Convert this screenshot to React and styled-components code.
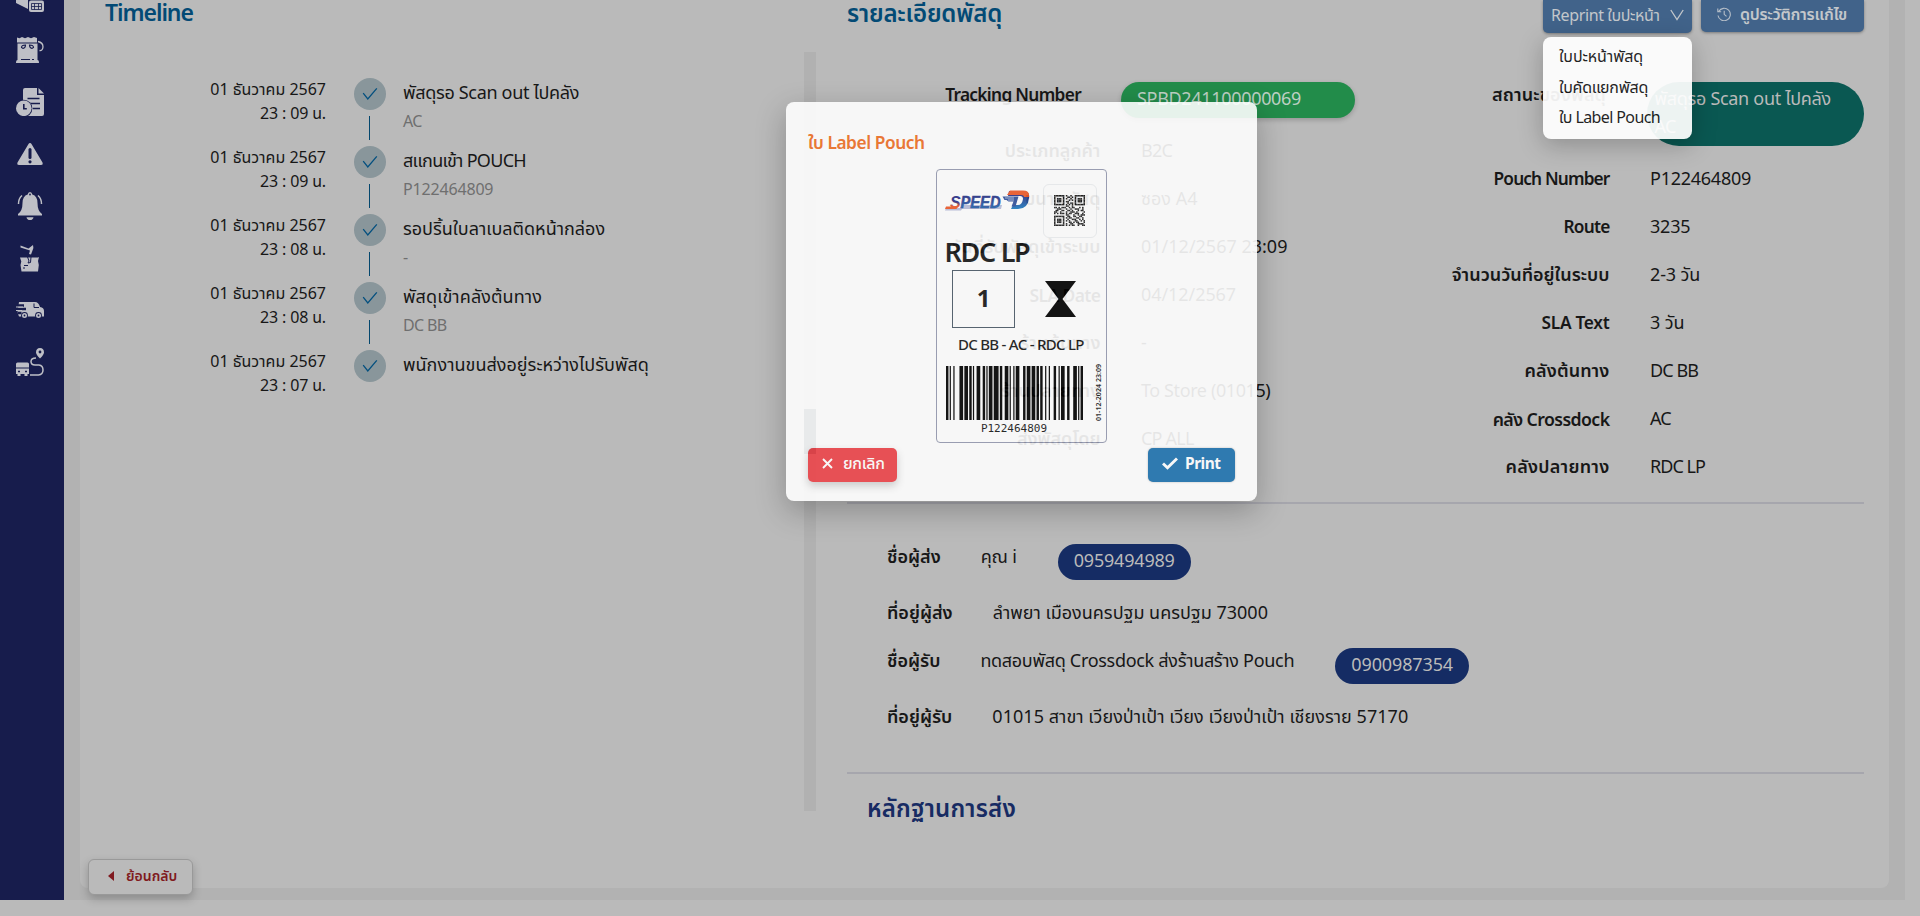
import React from "react";
import styled, { createGlobalStyle } from "styled-components";

const GlobalStyle = createGlobalStyle`
  *, *::before, *::after { box-sizing: border-box; }
  body {
    margin: 0;
    height: 916px;
    overflow: hidden;
    background: #bababa;
    color: #171717;
    font-family: "Noto Sans", "Noto Sans Thai", sans-serif;
    font-size: 18px;
    line-height: 24px;
  }
`;

const Text = styled.span`
  white-space: nowrap;
  font-size: ${(p) => p.$size || 18}px;
  font-weight: ${(p) => p.$weight || 400};
  letter-spacing: ${(p) => p.$ls || 0}px;
`;

const Page = styled.div`
  position: relative;
  width: 1920px;
  height: 916px;
  overflow: hidden;
`;
const Shell = styled.div`
  display: flex;
  width: 1905px;
  height: 900px;
  background: #b2b2b2;
`;
const Sidebar = styled.nav`
  display: flex;
  flex-direction: column;
  align-items: center;
  gap: 24px;
  width: 64px;
  padding-right: 4px;
  background: #171c4c;
  flex: none;
  overflow: hidden;
  svg { display: block; flex: none; }
  svg:first-child { margin-top: -16px; }
`;
const Card = styled.main`
  display: flex;
  width: 1809px;
  height: 888px;
  margin-left: 16px;
  border-radius: 0 0 8px 8px;
  background: #bababa;
`;

const TimelineColumn = styled.section`
  width: 724px;
  flex: none;
`;
const TimelineHeader = styled.header`
  display: flow-root;
  height: 77px;
  padding-left: 25px;
`;
const Heading = styled.h2`
  margin: 0;
  padding-top: ${(p) => p.$top || 0}px;
  margin-top: ${(p) => p.$pull || 0}px;
  color: ${(p) => p.$color || "#034a75"};
  font-size: ${(p) => p.$size || 24}px;
  font-weight: 600;
  line-height: 32px;
  white-space: nowrap;
  letter-spacing: ${(p) => p.$ls || 0}px;
`;
const Step = styled.div`
  display: flex;
  height: 68px;
`;
const StepDate = styled.div`
  display: flex;
  flex-direction: column;
  align-items: flex-end;
  width: 246px;
`;
const StepMark = styled.div`
  display: flex;
  flex-direction: column;
  align-items: center;
  width: 32px;
  margin: 1px 17px 0 28px;
`;
const Dot = styled.div`
  display: grid;
  place-items: center;
  width: 32px;
  height: 32px;
  border-radius: 50%;
  background: #89969b;
`;
const Line = styled.div`
  width: 1px;
  height: 24px;
  margin: 6px 1px 0 0;
  background: #04476e;
`;
const StepBody = styled.div`
  display: flex;
  flex-direction: column;
  gap: 5px;
  padding-top: 3px;
`;
const Muted = styled(Text)`
  color: #6f6f6f;
`;

const ScrollTrack = styled.div`
  width: 12px;
  height: 759px;
  margin-top: 52px;
  padding-top: 357px;
  background: #b1b1b1;
  flex: none;
`;
const ScrollThumb = styled.div`
  height: 45px;
  background: #2d3f4e;
`;

const DetailColumn = styled.section`
  width: 1017px;
  margin-left: 31px;
  flex: none;
`;
const DetailHeader = styled.header`
  display: flex;
  justify-content: space-between;
  height: 82px;
`;
const Actions = styled.div`
  display: flex;
  align-items: flex-start;
  gap: 9px;
`;
const Anchor = styled.div`
  position: relative;
`;
const ActionButton = styled.button`
  display: flex;
  align-items: center;
  gap: ${(p) => p.$gap}px;
  width: ${(p) => p.$width}px;
  height: ${(p) => p.$height}px;
  padding: 0 0 4px ${(p) => p.$left}px;
  border: 0;
  border-radius: 0 0 5px 5px;
  background: #41638a;
  box-shadow: 0 1px 3px rgba(0, 0, 0, 0.35);
  color: #c3c7cb;
  font: inherit;
  line-height: 24px;
`;
const Menu = styled.div`
  position: absolute;
  z-index: 2;
  top: 37px;
  left: 0;
  display: flex;
  flex-direction: column;
  width: 149px;
  height: 102px;
  padding: 4px 0 0 16px;
  border-radius: 8px;
  background: #fff;
  box-shadow: 0 6px 24px rgba(0, 0, 0, 0.25);
  opacity: 0.93;
  line-height: 30.7px;
`;

const DetailGrid = styled.div`
  display: flex;
  height: 420px;
`;
const DetailList = styled.div`
  width: ${(p) => p.$width}px;
`;
const DetailRow = styled.div`
  display: flex;
  gap: 40.5px;
  height: ${(p) => p.$height || 48}px;
`;
const Label = styled(Text)`
  width: ${(p) => p.$width}px;
  padding-top: ${(p) => (p.$size < 18 ? 0.8 : 0)}px;
  text-align: right;
`;
const TrackingPill = styled.div`
  width: 234px;
  height: 36px;
  margin-left: -0.5px;
  padding: 4px 16px;
  border-radius: 18px;
  background: #228c4a;
  box-shadow: 0 2px 5px rgba(0, 0, 0, 0.2);
  color: #bdd0c3;
`;
const StatusPill = styled.div`
  display: flex;
  flex-direction: column;
  width: 217.5px;
  height: 64px;
  padding: 2px 8px;
  border-radius: 32px;
  background: #0a5852;
  color: #bababa;
  line-height: 28px;
`;
const Divider = styled.div`
  height: 2px;
  background: #a6a6ad;
`;
const Contacts = styled.div`
  height: 268px;
  padding: 40px 0 0 40px;
`;
const ContactRow = styled.div`
  display: flex;
  gap: 40px;
  height: ${(p) => p.$height}px;
`;
const PhonePill = styled.div`
  height: 36px;
  margin-left: 1px;
  padding: 4px 16px;
  border-radius: 18px;
  background: #152c64;
  color: #bababa;
`;
const Evidence = styled.div`
  padding-left: 20px;
`;

const BackButton = styled.button`
  position: absolute;
  left: 88px;
  top: 859px;
  display: flex;
  align-items: center;
  gap: 12px;
  width: 105px;
  height: 36px;
  padding: 0 0 2px 19px;
  border: 1px solid #999;
  border-radius: 6px;
  background: #bababa;
  box-shadow: 0 4px 10px rgba(0, 0, 0, 0.22);
  color: #801a20;
  font: inherit;
`;

const Modal = styled.div`
  position: absolute;
  z-index: 3;
  left: 785.5px;
  top: 102px;
  display: flex;
  flex-direction: column;
  align-items: center;
  width: 471.5px;
  height: 399px;
  padding: 29px 22.5px 0;
  border-radius: 8px;
  background: #fff;
  box-shadow: 0 10px 30px rgba(0, 0, 0, 0.28);
  opacity: 0.89;
`;
const ModalTitle = styled(Text)`
  align-self: flex-start;
  color: #ef7026;
`;
const ModalFooter = styled.div`
  display: flex;
  justify-content: space-between;
  align-self: stretch;
  margin-top: 5px;
`;
const ModalButton = styled.button`
  display: flex;
  align-items: center;
  gap: ${(p) => p.$gap}px;
  width: ${(p) => p.$width}px;
  height: 34.5px;
  padding: 0 0 3px ${(p) => p.$left}px;
  border: 0;
  border-radius: 5px;
  background: ${(p) => p.$color};
  box-shadow: ${(p) => p.$shadow};
  color: #fff;
  font: inherit;
`;

const Slip = styled.div`
  width: 170.5px;
  height: 273.5px;
  margin-top: 14px;
  padding: 13.5px 0 0 7.5px;
  border: 1px solid #959ab0;
  border-radius: 4px;
  flex: none;
`;
const SlipTop = styled.div`
  display: flex;
  height: 52px;
  svg.logo { margin-top: 5px; flex: none; }
`;
const QrBox = styled.div`
  display: grid;
  place-items: center;
  width: 54px;
  height: 54px;
  margin-left: 12px;
  border: 1px solid #eceef0;
  border-radius: 6px;
`;
const Destination = styled.div`
  font-size: 27px;
  font-weight: 600;
  line-height: 32px;
  letter-spacing: -1.3px;
`;
const Sorting = styled.div`
  display: flex;
  align-items: center;
  gap: 30px;
  margin: 2px 0 6px 7.5px;
`;
const Slot = styled.div`
  width: 63px;
  height: 58px;
  border: 1.5px solid #4b5a68;
  font-size: 24px;
  font-weight: 700;
  line-height: 54px;
  text-align: center;
`;
const RouteText = styled.div`
  padding-left: 13.5px;
  font-size: 15px;
  font-weight: 500;
  line-height: 21px;
  letter-spacing: -0.72px;
  white-space: nowrap;
`;
const CodeRow = styled.div`
  display: flex;
  margin-top: 11px;
  padding-left: 1px;
`;
const Code = styled.div`
  display: flex;
  flex-direction: column;
  align-items: center;
  width: 137px;
  font-family: "DejaVu Sans Mono", monospace;
  font-size: 11px;
  line-height: 18px;
`;
const Stamp = styled.div`
  writing-mode: vertical-rl;
  transform: rotate(180deg);
  height: 60px;
  margin: -5px 0 0 11px;
  font-size: 7px;
  font-weight: 600;
  line-height: 9px;
  letter-spacing: 0.05px;
  white-space: nowrap;
`;

const steps = [
  ["23 : 09 น.", "พัสดุรอ Scan out ไปคลัง", "AC", -0.32, -0.7],
  ["23 : 09 น.", "สแกนเข้า POUCH", "P122464809", -0.7, -0.17],
  ["23 : 08 น.", "รอปริ้นใบลาเบลติดหน้ากล่อง", "-", 0, 0],
  ["23 : 08 น.", "พัสดุเข้าคลังต้นทาง", "DC BB", 0.1, -0.65],
  ["23 : 07 น.", "พนักงานขนส่งอยู่ระหว่างไปรับพัสดุ", "", 0.03, 0],
];

// label, value, label size, label spacing, value spacing
const leftDetails = [
  ["ประเภทลูกค้า", "B2C", 18, 0, -0.8],
  ["ขนาดพัสดุ", "ซอง A4", 18, 0, 0],
  ["วันที่รับพัสดุเข้าระบบ", "01/12/2567 23:09", 18, 0, 0],
  ["SLA Date", "04/12/2567", 17.5, -0.6, -0.07],
  ["ร้านต้นทาง", "-", 18, 0, 0],
  ["ร้านปลายทาง", "To Store (01015)", 18, 0.15, -0.4],
  ["ส่งพัสดุโดย", "CP ALL", 18, 0, -0.8],
];
const rightDetails = [
  ["Pouch Number", "P122464809", 17.3, -0.86, -0.25],
  ["Route", "3235", 17.3, -0.78, -0.21],
  ["จำนวนวันที่อยู่ในระบบ", "2-3 วัน", 18, 0, -0.13],
  ["SLA Text", "3 วัน", 17.3, -0.27, -0.13],
  ["คลังต้นทาง", "DC BB", 18, 0.1, -0.9],
  ["คลัง Crossdock", "AC", 17.7, -0.58, -0.8],
  ["คลังปลายทาง", "RDC LP", 18, 0.25, -0.95],
];

// Code 128 symbols of the pouch number, as bar and gap widths
const barcode =
  "211214" + "313121" + "123221" + "113141" + "223112" + "113321" + "313121" + "221213" + "221132" + "2331112";

const qr = [
  "111111101001001111111",
  "100000100110101000001",
  "101110101001001011101",
  "101110100010101011101",
  "101110101100001011101",
  "100000100101101000001",
  "111111101010101111111",
  "000000001100100000000",
  "110101110010110001010",
  "001110001001001110010",
  "011001100110100010110",
  "110010001001110100001",
  "101011101011001110010",
  "000000001100010010111",
  "111111100110011001100",
  "100000101011000110010",
  "101110100100111001010",
  "101110101010001100101",
  "101110100011010110001",
  "100000101001100011110",
  "111111101010110010011",
];

function Barcode() {
  let x = 0;
  const bars = [];
  [...barcode].forEach((c, i) => {
    const w = Number(c);
    if (i % 2 === 0) bars.push(<rect key={i} x={x} width={w} height="54" />);
    x += w;
  });
  return (
    <svg width="137" height="54" viewBox={`0 0 ${x} 54`} preserveAspectRatio="none" fill="#000">
      {bars}
    </svg>
  );
}

function QrCode() {
  return (
    <svg width="31" height="31" viewBox="0 0 21 21" fill="#1c1c1c">
      {qr.flatMap((row, y) =>
        [...row].map((c, x) => (c === "1" ? <rect key={`${x}-${y}`} x={x} y={y} width="1.03" height="1.03" /> : null))
      )}
    </svg>
  );
}

function Logo() {
  return (
    <svg className="logo" width="86" height="26" viewBox="0 0 86 26">
      <defs>
        <linearGradient id="word" x1="0" y1="0" x2="0" y2="1">
          <stop offset="0.2" stopColor="#2b2f86" />
          <stop offset="1" stopColor="#1f7fc4" />
        </linearGradient>
        <linearGradient id="first" x1="0" y1="0" x2="0" y2="1">
          <stop offset="0.5" stopColor="#2b2f86" />
          <stop offset="0.75" stopColor="#ee5a2a" />
        </linearGradient>
      </defs>
      <path d="M1 19h14l2-3h40l-1 4H17l-1 1.500H0z" fill="#b9bfdc" />
      <path d="M1 17.500h12l-1.500 2.500H0z" fill="#ee5a2a" />
      <g fontFamily="Liberation Sans" fontWeight="700" fontStyle="italic" fontSize="16" strokeWidth="0.500">
        <text x="5" y="18.500" fill="url(#first)">S</text>
        <text x="15.500" y="18.500" fill="url(#word)" stroke="#26408f" textLength="40" lengthAdjust="spacingAndGlyphs">PEED</text>
      </g>
      <path d="M64 2h14q7 0 6 7q-1 11-11 11H66l2-4h5q4 0 5-6q0-3-3-3H63z" fill="url(#word)" />
      <path d="M65 1.500h13q7 0 6 6.500h-5q0-2-3-2H62z" fill="#ee5a2a" />
      <path d="M57.500 7.500h16l-3 10h-4l2-5h-5l-2-1.500h-2z" fill="#31519c" />
      <path d="M60 9h9M63 11h6" stroke="#cfd8ee" strokeWidth="0.800" />
    </svg>
  );
}

const Check = () => (
  <svg width="16" height="14" viewBox="0 0 16 14" fill="none" stroke="#04507f" strokeWidth="1.300">
    <path d="M1.200 6.200L5.800 12L14.800 1.300" />
  </svg>
);

const ink = "#bebfc6";
const navy = "#171c4c";

function SidebarIcons() {
  const box = { width: 28, height: 28, viewBox: "0 0 28 28", fill: ink };
  return (
    <Sidebar>
      <svg {...box}>
        <path d="M0 12h12v13L0 19z" />
        <rect x="13" y="16.500" width="15" height="11.500" rx="2" />
        <path d="M15.500 19.500h10v6h-10zM15.500 22.500h10M18.500 19.500v6M22.500 19.500v6" fill="none" stroke={navy} strokeWidth=".8" />
      </svg>
      <svg {...box}>
        <path d="M1 1.500l2.500.800L6 1l3 1.300L12 1l3 1.300L18 1l3 1v4.500H1z" />
        <path d="M1.500 7.500h20V24q1.500 0 1.500 3H0q0-3 1.500-3z" />
        <path d="M22 5.500q5 1 5 5.500q-.5 4-3.500 3.500" fill="none" stroke={ink} strokeWidth="1.300" />
        <path d="M5.500 11.500q0-2.500 4-2.500q0 3-2.500 3.500zM17.500 11.500q0-2.500-4-2.500q0 3 2.500 3.500z" fill="none" stroke={navy} strokeWidth="1.100" />
        <path d="M5 23.500h9M16 23.500h2" stroke={navy} />
      </svg>
      <svg {...box}>
        <path d="M9 0h12v7h7v19q0 2-2 2H7V2q0-2 2-2z" />
        <path d="M22.500 0L28 5.500h-5.500z" />
        <path d="M11.500 10.500h12M15 15.500h9M17 20.500h7" stroke={navy} strokeWidth="1.400" />
        <circle cx="7.800" cy="20.300" r="8.600" fill={navy} />
        <circle cx="7.800" cy="20.300" r="7.800" />
        <path d="M7.800 16v4.800h3" fill="none" stroke={navy} strokeWidth="1.600" />
      </svg>
      <svg {...box}>
        <path d="M14 3q1 0 1.500 1L26.500 22.500q.8 2.500-1.500 2.500H3q-2.300 0-1.500-2.500L12.500 4Q13 3 14 3z" />
        <path d="M14 9.500v8" stroke={navy} strokeWidth="3" strokeLinecap="round" />
        <circle cx="14" cy="21.800" r="1.600" fill={navy} />
      </svg>
      <svg {...box}>
        <path d="M14 0q2 0 2.300 2.500Q21.500 4 21.500 11q0 8 4.500 11v1.500H2V22q4.500-3 4.500-11q0-7 5.200-8.500Q12 0 14 0z" />
        <path d="M10.500 25.200h7q-.5 2.800-3.500 2.800t-3.500-2.800z" />
        <path d="M6 3.500Q2.500 6.500 2.500 12M22 3.500q3.500 3 3.500 8.500" fill="none" stroke={ink} strokeWidth="1.500" />
        <circle cx="14" cy="2.500" r=".9" fill={navy} />
      </svg>
      <svg {...box}>
        <path d="M4.500 1.500l8 3L17 1q1 3-.5 5.500l-1.500 4l-2-.500l1-3.500l-9.500-3z" />
        <path d="M5 13.500h17l1-.500-1 4 .8 4-.8 6.500H5.500L4.500 21l.8-3.500-1.300-4z" />
        <path d="M11.500 13l1.500 4-1 2 2.500-.500L15 13M8 21.500h4M7 24h2" fill="none" stroke={navy} />
      </svg>
      <svg {...box}>
        <path d="M3 6h16q3.500 0 5 5q4 .5 4 4v5.500H3l-1.500-4z" />
        <path d="M0 9.500h8M1 13h9M1.500 17h4" stroke={navy} strokeWidth="2.400" />
        <path d="M0 11h7M0 14.500h6" stroke={ink} strokeWidth="1.200" />
        <path d="M18 7.500v4h5" fill="none" stroke={navy} />
        <circle cx="8.500" cy="19.500" r="3.400" fill={navy} /><circle cx="8.500" cy="19.500" r="2.500" />
        <circle cx="22.500" cy="19.500" r="3.400" fill={navy} /><circle cx="22.500" cy="19.500" r="2.500" />
        <circle cx="8.500" cy="19.500" r=".9" fill={navy} /><circle cx="22.500" cy="19.500" r=".9" fill={navy} />
      </svg>
      <svg {...box}>
        <path d="M24 0q4 .3 4 4.200q0 2.300-4 6.300q-4-4-4-6.300Q20 .3 24 0z" />
        <circle cx="24" cy="4" r="1.400" fill={navy} />
        <path d="M20 10q-5 0-5 3.500t4 3.500h4q4 .5 4 5t-4.500 5H14" fill="none" stroke={ink} strokeWidth="1.500" />
        <path d="M1.500 14.500h10q1.500 0 1.500 1.500v10h-1.500v2h-3v-2h-4v2h-3v-2H0V16q0-1.500 1.500-1.500z" />
        <path d="M0 20h13" stroke={navy} /><path d="M2 23.500h2M9 23.500h2" stroke={navy} strokeWidth="1.400" />
      </svg>
    </Sidebar>
  );
}

function Timeline() {
  return (
    <TimelineColumn>
      <TimelineHeader>
        <Heading $pull={-4.5} $size={23} $ls={-1.05}>Timeline</Heading>
      </TimelineHeader>
      {steps.map(([time, title, place, ls, subLs], i) => (
        <Step key={i}>
          <StepDate>
            <Text $size={16}>01 ธันวาคม 2567</Text>
            <Text $size={16} $ls={-0.15}>{time}</Text>
          </StepDate>
          <StepMark>
            <Dot><Check /></Dot>
            {i < steps.length - 1 && <Line />}
          </StepMark>
          <StepBody>
            <Text $ls={ls}>{title}</Text>
            <Muted $size={16} $ls={subLs}>{place}</Muted>
          </StepBody>
        </Step>
      ))}
    </TimelineColumn>
  );
}

function PouchSlip() {
  return (
    <Slip>
      <SlipTop>
        <Logo />
        <QrBox><QrCode /></QrBox>
      </SlipTop>
      <Destination>RDC LP</Destination>
      <Sorting>
        <Slot>1</Slot>
        <svg width="31" height="36" viewBox="0 0 31 36"><path d="M0 0h31L17.500 18L31 36H0L13.500 18z" /></svg>
      </Sorting>
      <RouteText>DC BB - AC - RDC LP</RouteText>
      <CodeRow>
        <Code>
          <Barcode />
          P122464809
        </Code>
        <Stamp>01-12-2024 23:09</Stamp>
      </CodeRow>
    </Slip>
  );
}

export default function App() {
  return (
    <Page>
      <GlobalStyle />
      <Shell>
        <SidebarIcons />
        <Card>
          <Timeline />
          <ScrollTrack><ScrollThumb /></ScrollTrack>
          <DetailColumn>
            <DetailHeader>
              <Heading $pull={-3} $ls={-0.19}>รายละเอียดพัสดุ</Heading>
              <Actions>
                <Anchor>
                  <ActionButton $width={149} $height={33} $left={8} $gap={10}>
                    <Text $size={16} $ls={-0.38}>Reprint ใบปะหน้า</Text>
                    <svg width="14" height="12" viewBox="0 0 14 12" fill="none" stroke="#c3c7cb" strokeWidth="1.300">
                      <path d="M.8 1L7 10.500L13.200 1" />
                    </svg>
                  </ActionButton>
                  <Menu>
                    <Text $size={16} $ls={-0.1}>ใบปะหน้าพัสดุ</Text>
                    <Text $size={16} $ls={-0.26}>ใบคัดแยกพัสดุ</Text>
                    <Text $size={16} $ls={-0.61}>ใบ Label Pouch</Text>
                  </Menu>
                </Anchor>
                <ActionButton $width={163} $height={32} $left={16} $gap={9}>
                  <svg width="14" height="14" viewBox="0 0 14 14" fill="none" stroke="#b4bdc7" strokeWidth="1.100">
                    <path d="M1.700 4.500A6.200 6.200 0 1 1 1 8.500M.8 1.500v3.300h3.400M7.200 3.800v3.500l2.300 2" />
                  </svg>
                  <Text $size={16} $weight={600} $ls={-0.28}>ดูประวัติการแก้ไข</Text>
                </ActionButton>
              </Actions>
            </DetailHeader>
            <DetailGrid>
              <DetailList $width={509}>
                <DetailRow $height={56}>
                  <Label $width={234} $size={17.3} $weight={600} $ls={-0.68}>Tracking Number</Label>
                  <TrackingPill><Text $ls={-0.32}>SPBD241100000069</Text></TrackingPill>
                </DetailRow>
                {leftDetails.map(([label, value, size, ls, valueLs]) => (
                  <DetailRow key={label}>
                    <Label $width={253.5} $size={size} $weight={600} $ls={ls}>{label}</Label>
                    <Text $ls={valueLs}>{value}</Text>
                  </DetailRow>
                ))}
              </DetailList>
              <DetailList $width={508}>
                <DetailRow $height={84}>
                  <Label $width={250} $weight={600} $ls={0.1}>สถานะของพัสดุ</Label>
                  <StatusPill>
                    <Text $ls={-0.3}>พัสดุรอ Scan out ไปคลัง</Text>
                    <Text $ls={-0.6}>AC</Text>
                  </StatusPill>
                </DetailRow>
                {rightDetails.map(([label, value, size, ls, valueLs]) => (
                  <DetailRow key={label}>
                    <Label $width={253.5} $size={size} $weight={600} $ls={ls}>{label}</Label>
                    <Text $ls={valueLs}>{value}</Text>
                  </DetailRow>
                ))}
              </DetailList>
            </DetailGrid>
            <Divider />
            <Contacts>
              <ContactRow $height={56}>
                <Text $weight={600}>ชื่อผู้ส่ง</Text>
                <Text $ls={-0.19}>คุณ i</Text>
                <PhonePill><Text $ls={-0.2}>0959494989</Text></PhonePill>
              </ContactRow>
              <ContactRow $height={48}>
                <Text $weight={600}>ที่อยู่ผู้ส่ง</Text>
                <Text>ลำพยา เมืองนครปฐม นครปฐม 73000</Text>
              </ContactRow>
              <ContactRow $height={56}>
                <Text $weight={600}>ชื่อผู้รับ</Text>
                <Text $ls={-0.3}>ทดสอบพัสดุ Crossdock ส่งร้านสร้าง Pouch</Text>
                <PhonePill><Text $ls={-0.12}>0900987354</Text></PhonePill>
              </ContactRow>
              <ContactRow $height={24}>
                <Text $weight={600}>ที่อยู่ผู้รับ</Text>
                <Text $ls={0.04}>01015 สาขา เวียงป่าเป้า เวียง เวียงป่าเป้า เชียงราย 57170</Text>
              </ContactRow>
            </Contacts>
            <Divider />
            <Evidence>
              <Heading $top={17.5} $color="#172b63" $ls={0.17}>หลักฐานการส่ง</Heading>
            </Evidence>
          </DetailColumn>
        </Card>
      </Shell>
      <BackButton>
        <svg width="6" height="10" viewBox="0 0 6 10"><path d="M6 0v10L0 5z" fill="#801a20" /></svg>
        <Text $size={14} $weight={600}>ย้อนกลับ</Text>
      </BackButton>
      <Modal>
        <ModalTitle $weight={600} $size={17.3} $ls={-0.42}>ใบ Label Pouch</ModalTitle>
        <PouchSlip />
        <ModalFooter>
          <ModalButton $width={88.5} $left={14} $gap={10} $color="#ed4449" $shadow="0 4px 8px rgba(0,0,0,0.2)">
            <svg width="11" height="11" viewBox="0 0 11 11" stroke="#fff" strokeWidth="1.900"><path d="M1 1l9 9M10 1l-9 9" /></svg>
            <Text $size={16} $weight={500} $ls={-0.3}>ยกเลิก</Text>
          </ModalButton>
          <ModalButton $width={86.5} $left={13.5} $gap={7.5} $color="#1e73af" $shadow="0 0 2px rgba(0,0,0,0.3)">
            <svg width="16" height="13" viewBox="0 0 16 13" fill="none" stroke="#fff" strokeWidth="2.900"><path d="M1 6.500l4.500 4.300L15 1.500" /></svg>
            <Text $size={15.5} $weight={700} $ls={-0.5}>Print</Text>
          </ModalButton>
        </ModalFooter>
      </Modal>
    </Page>
  );
}
